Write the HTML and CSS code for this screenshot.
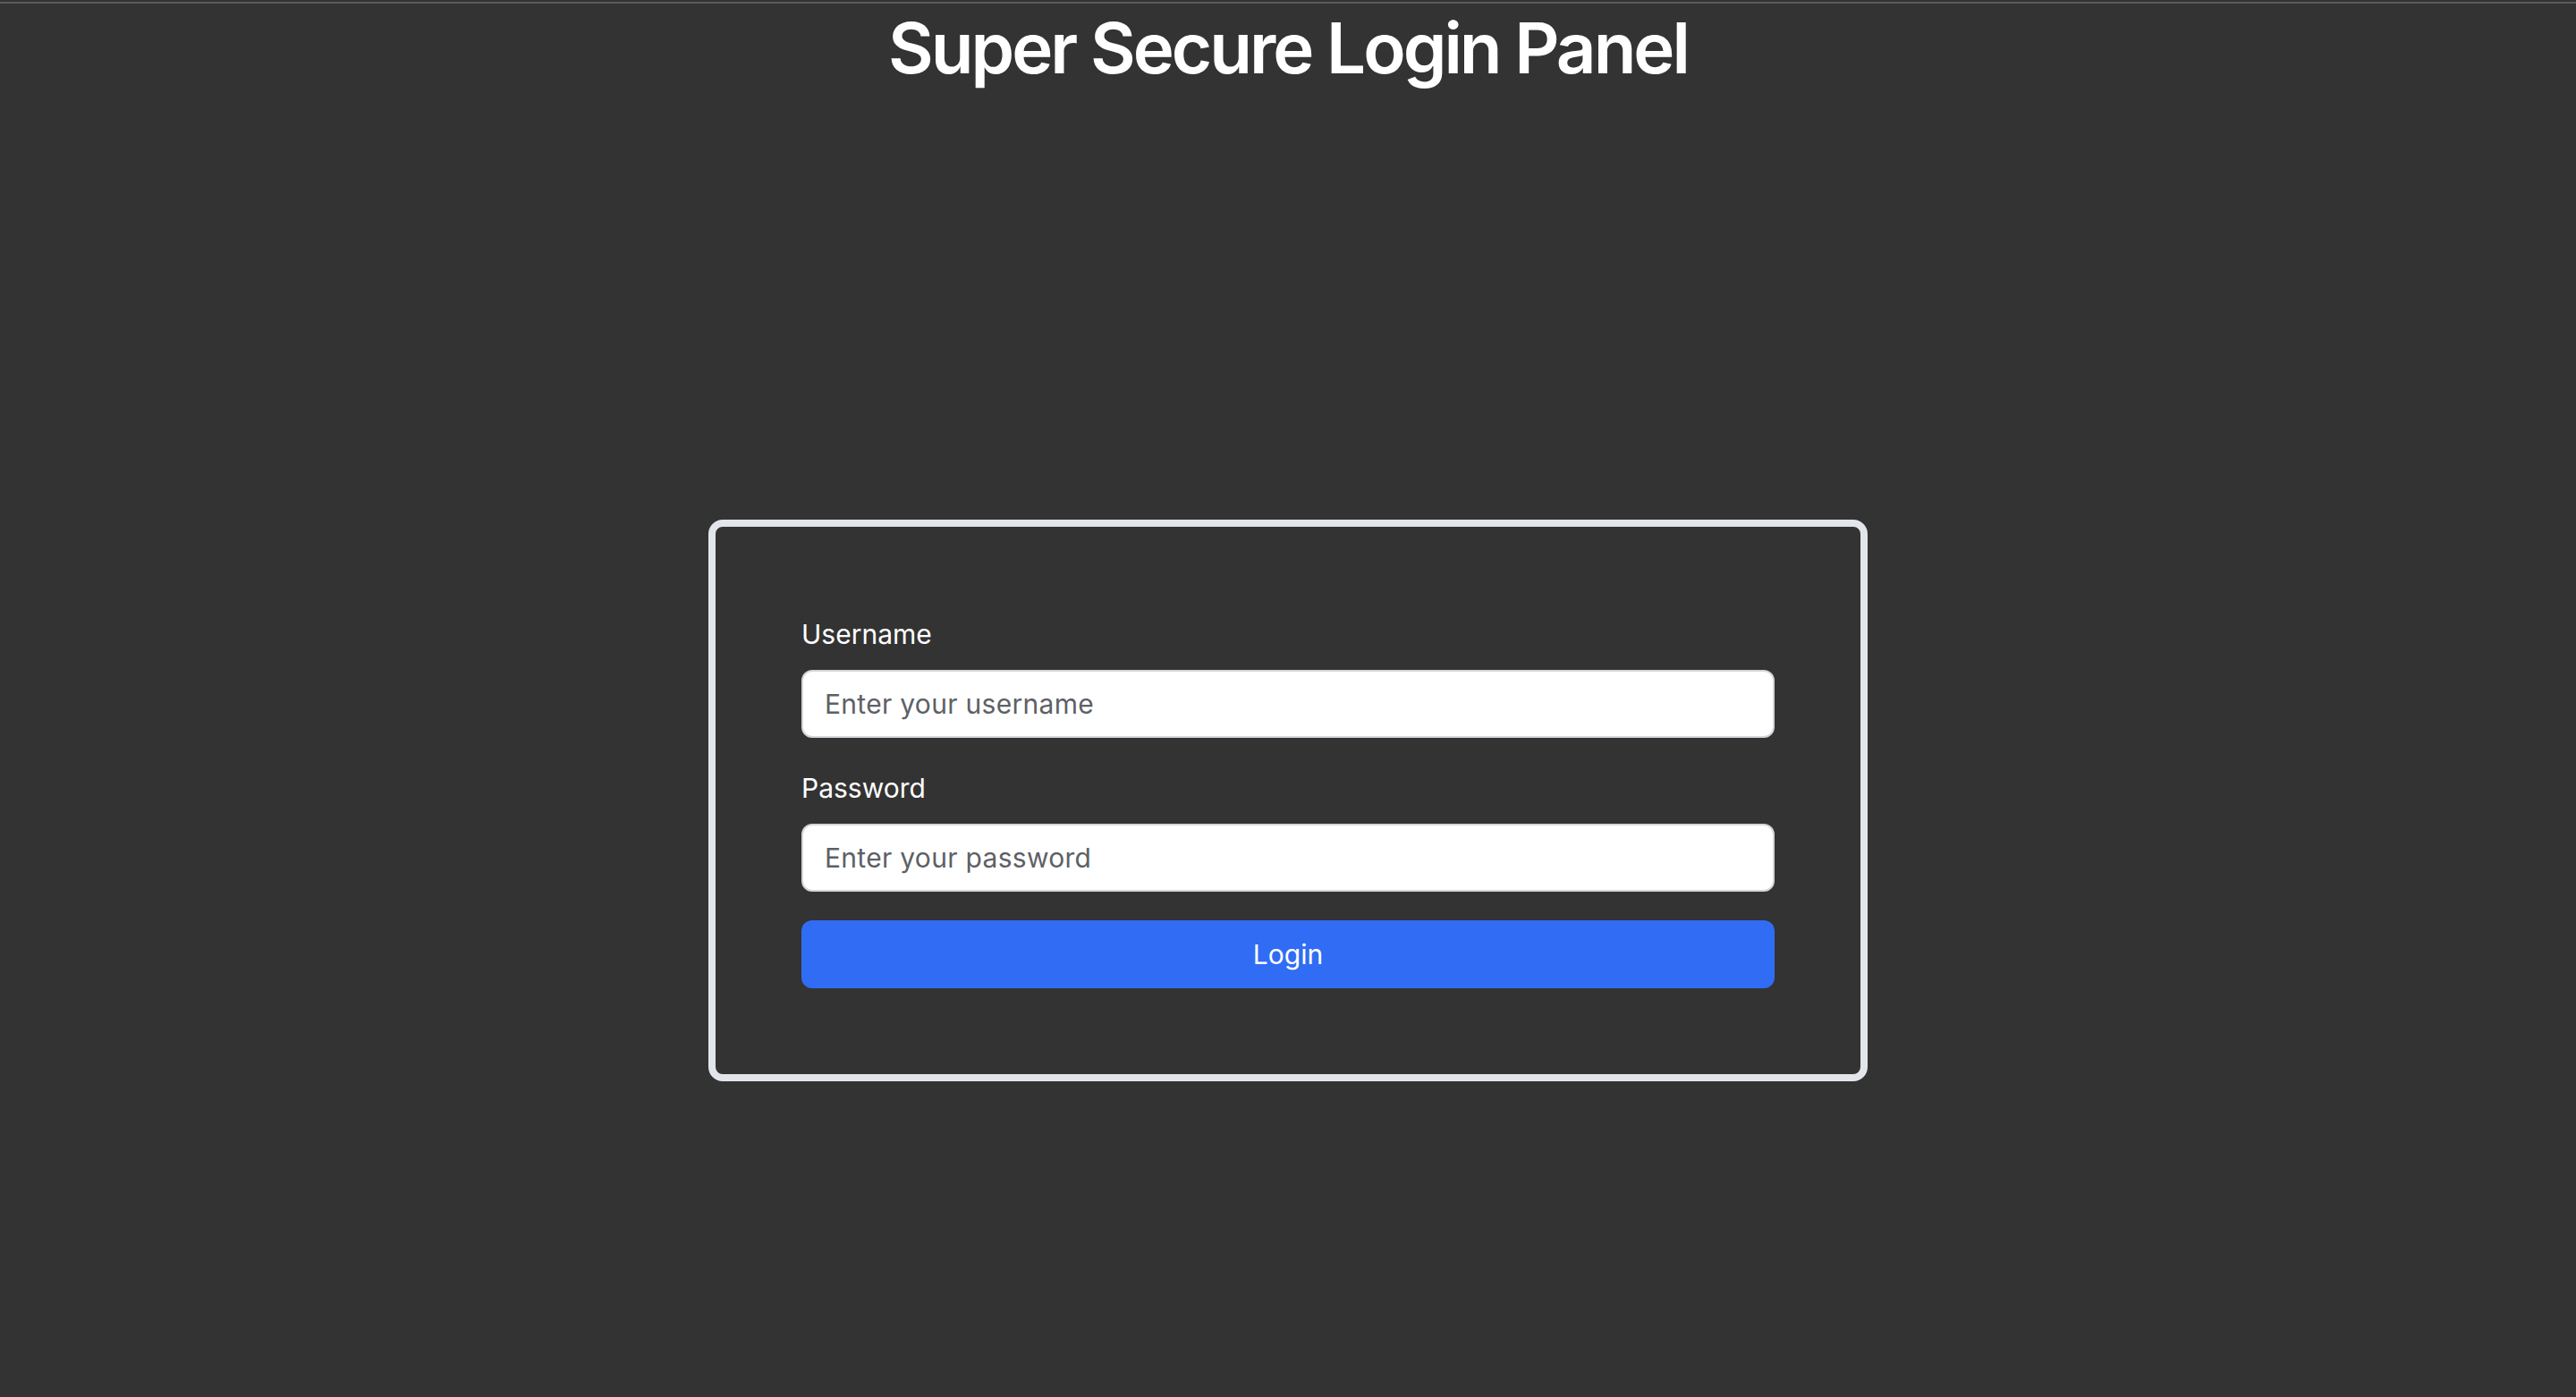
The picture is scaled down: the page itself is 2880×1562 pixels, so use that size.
FILE: index.html
```html
<!DOCTYPE html>
<html lang="en">
<head>
<meta charset="utf-8">
<title>Super Secure Login Panel</title>
<link rel="stylesheet" href="styles.css">
</head>
<body>
<div class="topline"></div>
<h1 class="title">Super Secure Login Panel</h1>
<main class="stage">
  <form class="card">
    <div class="field">
      <label class="label" for="username">Username</label>
      <input class="input" id="username" type="text" placeholder="Enter your username">
    </div>
    <div class="field">
      <label class="label" for="password">Password</label>
      <input class="input" id="password" type="password" placeholder="Enter your password">
    </div>
    <button class="btn" type="button">Login</button>
  </form>
</main>
</body>
</html>
```
FILE: styles.css
```css
* { box-sizing: border-box; }
html, body {
  margin: 0;
  padding: 0;
  background: #333333;
  font-family: Inter, "Liberation Sans", sans-serif;
  color: #ffffff;
}
.topline {
  height: 2px;
  margin-top: 2px;
  background: #5b5b5b;
}
.title {
  margin: 2px 0 12px;
  font-size: 78px;
  line-height: 96px;
  font-weight: 600;
  letter-spacing: -3px;
  text-align: center;
  color: #ffffff;
}
.stage {
  min-height: 1562px;
  display: flex;
  align-items: center;
  justify-content: center;
}
.card {
  width: 1296px;
  border: 8px solid #e2e5e9;
  border-radius: 16px;
  padding: 100px 96px 96px;
  display: flex;
  flex-direction: column;
}
.field {
  display: flex;
  flex-direction: column;
  margin-bottom: 36px;
}
.field + .field { margin-bottom: 32px; }
.label {
  font-size: 30px;
  line-height: 40px;
  margin-bottom: 20px;
  color: #ffffff;
}
.input {
  height: 76px;
  border: 2px solid #d3d6db;
  border-radius: 12px;
  background: #ffffff;
  padding: 0 24px;
  font-family: Inter, "Liberation Sans", sans-serif;
  font-size: 30px;
  letter-spacing: 0.3px;
  color: #222;
  outline: none;
}
.input::placeholder { color: #5d6166; }
.btn {
  height: 76px;
  border: none;
  border-radius: 12px;
  background: #316cf4;
  color: #ffffff;
  font-family: Inter, "Liberation Sans", sans-serif;
  font-size: 30px;
  cursor: pointer;
}
```
